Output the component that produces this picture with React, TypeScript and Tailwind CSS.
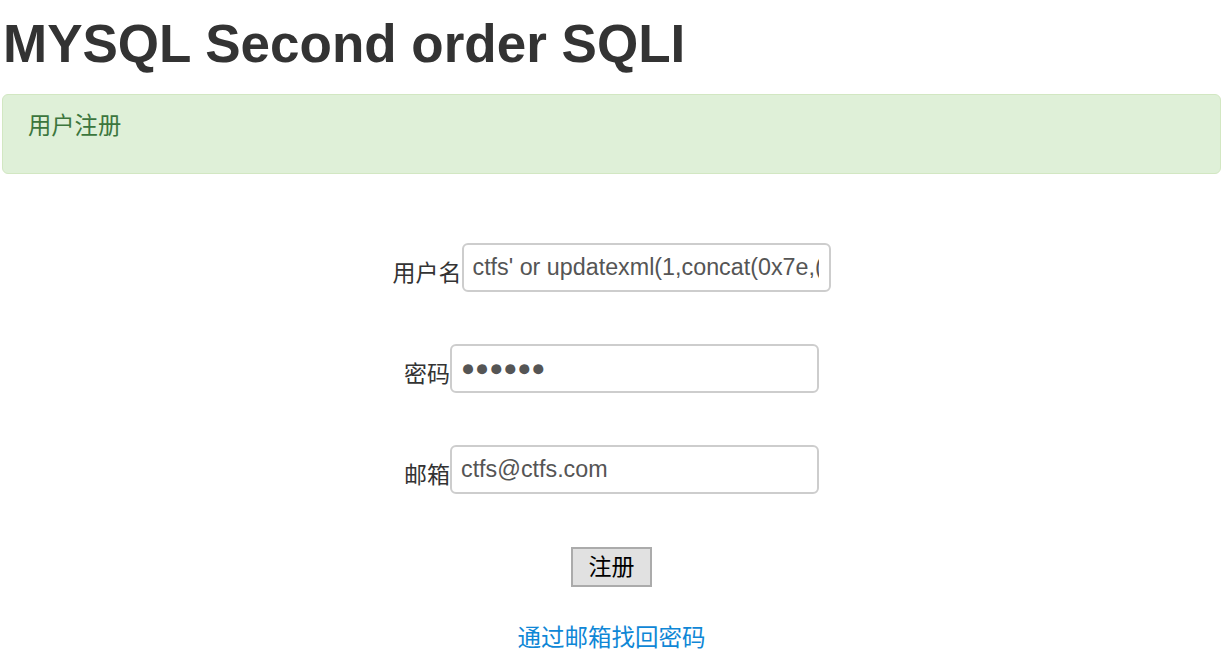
import React from "react";

const cjk = '"Liberation Sans", "Noto Sans CJK SC", sans-serif';

function Row({ label, value, mt }: { label: string; value: string; mt: string }) {
  return (
    <div className={`flex justify-center items-end ${mt}`}>
      <span className="text-[23px] leading-[33px] text-[#333333] mb-[2px] whitespace-nowrap">{label}</span>
      <input
        readOnly
        value={value}
        className="w-[369px] h-[49px] border-2 border-[#cdcdcd] rounded-[6px] pl-[9px] pr-[10px] text-[23.3px] text-[#555555] bg-white outline-none"
        style={{ fontFamily: '"Liberation Sans", Arial, sans-serif' }}
      />
    </div>
  );
}

export default function App() {
  return (
    <div className="w-[1231px] h-[654px] bg-white overflow-hidden" style={{ fontFamily: cjk }}>
      <div className="ml-[2px] w-[1219px] pt-[14px]">
        <h1 className="text-[53px] leading-[60px] font-bold text-[#333333] m-0 pl-[1px]" style={{ fontFamily: '"Liberation Sans", Arial, sans-serif' }}>
          MYSQL Second order SQLI
        </h1>
        <div className="mt-[20px] h-[80px] border border-[#d2e7c2] bg-[#dff0d8] rounded-[6px] pl-[25px] pt-[15px]">
          <span className="text-[23.3px] leading-[33px] text-[#3c763d]">用户注册</span>
        </div>
        <div className="flex flex-col">
          <Row label="用户名" value="ctfs' or updatexml(1,concat(0x7e,(select database()),0x7e),1)#" mt="mt-[69px]" />
          <Row label="密码" value="●●●●●●" mt="mt-[52px]" />
          <Row label="邮箱" value="ctfs@ctfs.com" mt="mt-[52px]" />
          <div className="flex justify-center mt-[53px]">
            <button className="w-[81px] h-[40px] border-2 border-[#ababab] bg-[#e1e1e1] text-[23px] leading-[33px] text-black">
              注册
            </button>
          </div>
          <div className="flex justify-center mt-[35px]">
            <a href="#" className="text-[23.5px] leading-[33px] text-[#0f87d6] no-underline">
              通过邮箱找回密码
            </a>
          </div>
        </div>
      </div>
    </div>
  );
}
